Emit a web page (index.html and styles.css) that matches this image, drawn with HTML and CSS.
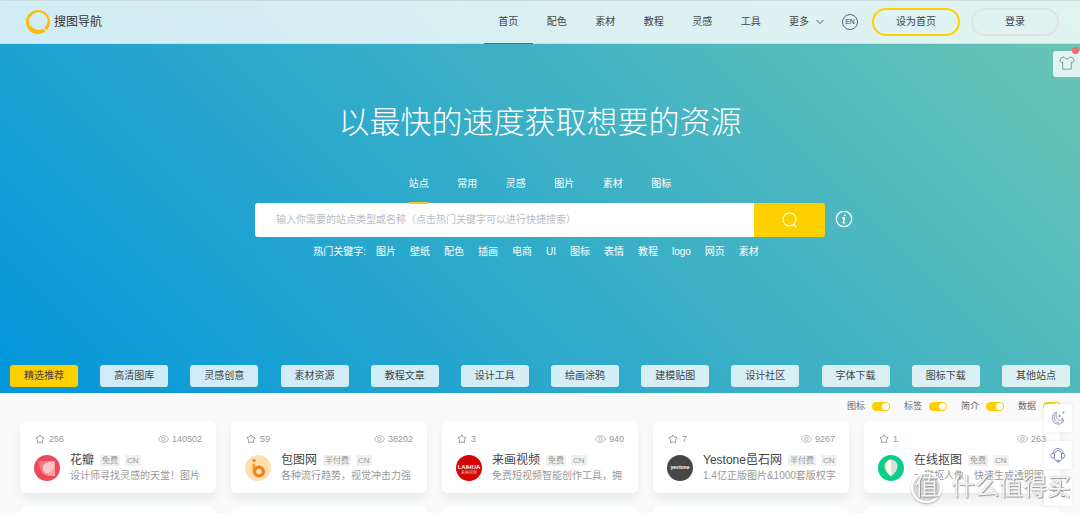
FILE: index.html
```html
<!DOCTYPE html>
<html lang="zh-CN">
<head>
<meta charset="utf-8">
<title>搜图导航</title>
<link rel="stylesheet" href="styles.css">
</head>
<body>
<svg class="defs" aria-hidden="true">
  <symbol id="star" viewBox="0 0 20 20"><path d="M10 1.800l2.800 4 5.200 1.500-3.200 4.500.1 5.700L10 15.800 5.100 17.500l.1-5.700L2 7.300l5.200-1.500z" fill="none" stroke="currentColor" stroke-width="1.900" stroke-linejoin="round"/></symbol>
  <symbol id="eye" viewBox="0 0 22 16"><path d="M1 8C5-1 17-1 21 8 17 17 5 17 1 8z" fill="none" stroke="currentColor" stroke-width="1.400"/><circle cx="11" cy="8" r="3.300" fill="none" stroke="currentColor" stroke-width="1.400"/></symbol>
</svg>
<div class="hero">
  <header class="header">
    <a class="brand" href="#">
      <svg class="brand-logo" viewBox="0 0 24 24"><path fill="#fdbc0b" fill-rule="evenodd" d="M12 0a12 12 0 1 1 0 24A12 12 0 0 1 12 0zM12.500 2a9 9 0 1 0 0 18 9 9 0 0 0 0-18z"/><path d="M4 6.500C2.500 10 2.700 14 4.600 17" fill="none" stroke="#fff0b5" stroke-width=".6"/><path d="M17.500 18l4 4.500" stroke="#d5edf3" stroke-width="1.500"/></svg>
      <span>搜图导航</span>
    </a>
    <nav class="nav">
      <a class="nav-item active" href="#">首页</a><a class="nav-item" href="#">配色</a><a class="nav-item" href="#">素材</a><a class="nav-item" href="#">教程</a><a class="nav-item" href="#">灵感</a><a class="nav-item" href="#">工具</a>
    </nav>
    <button class="more" type="button">更多 <svg width="8" height="6" viewBox="0 0 8 6"><path d="M.5 1L4 4.500 7.500 1" fill="none" stroke="currentColor" stroke-width=".9"/></svg></button>
    <button class="lang" type="button">EN</button>
    <button class="pill pill-main" type="button">设为首页</button>
    <button class="pill" type="button">登录</button>
  </header>
  <h1 class="title">以最快的速度获取想要的资源</h1>
  <nav class="tabs">
    <a class="tab" href="#"><span class="current">站点</span></a><a class="tab" href="#"><span>常用</span></a><a class="tab" href="#"><span>灵感</span></a><a class="tab" href="#"><span>图片</span></a><a class="tab" href="#"><span>素材</span></a><a class="tab" href="#"><span>图标</span></a>
  </nav>
  <form class="search">
    <input class="search-input" type="text" aria-label="搜索" placeholder="输入你需要的站点类型或名称（点击热门关键字可以进行快捷搜索）">
    <button class="search-button" type="button" aria-label="搜索"><svg width="16" height="16" viewBox="0 0 16 16" fill="none" stroke="#fff" stroke-width="1.200"><circle cx="7.500" cy="7.500" r="6.500"/><path d="M11.500 12.500l2.800 2.800" stroke-width="1.500"/></svg></button>
    <button class="info" type="button" aria-label="说明"><svg width="18" height="18" viewBox="0 0 18 18" fill="none" stroke="#fff"><circle cx="9" cy="9" r="7.700" stroke-width="1.300"/><path d="M7 8h2.500l-1.300 4.500c0 .8 1 .7 2 0" stroke-width="1.300"/><circle cx="9.800" cy="5.300" r=".6" fill="#fff"/></svg></button>
  </form>
  <div class="keywords">
    <span>热门关键字:</span><a href="#">图片</a><a href="#">壁纸</a><a href="#">配色</a><a href="#">插画</a><a href="#">电商</a><a href="#">UI</a><a href="#">图标</a><a href="#">表情</a><a href="#">教程</a><a href="#">logo</a><a href="#">网页</a><a href="#">素材</a>
  </div>
  <div class="categories">
    <button class="category selected" type="button">精选推荐</button>
    <button class="category" type="button">高清图库</button>
    <button class="category" type="button">灵感创意</button>
    <button class="category" type="button">素材资源</button>
    <button class="category" type="button">教程文章</button>
    <button class="category" type="button">设计工具</button>
    <button class="category" type="button">绘画涂鸦</button>
    <button class="category" type="button">建模贴图</button>
    <button class="category" type="button">设计社区</button>
    <button class="category" type="button">字体下载</button>
    <button class="category" type="button">图标下载</button>
    <button class="category" type="button">其他站点</button>
  </div>
</div>
<main>
  <div class="switches">
    <label>图标<input type="checkbox" checked></label>
    <label>标签<input type="checkbox" checked></label>
    <label>简介<input type="checkbox" checked></label>
    <label>数据<input type="checkbox" checked></label>
  </div>
  <div class="cards">
    <article class="card">
      <div class="stats"><svg class="star"><use href="#star"/></svg><span>256</span><svg class="eye"><use href="#eye"/></svg><span>140502</span></div>
      <div class="site">
        <svg class="avatar" viewBox="0 0 26 26"><circle cx="13" cy="13" r="13" fill="#ee4958"/><path d="M5 6h16v15h-7C8 20 5 15 5 6z" fill="#f47b84"/><path d="M21 6v15C13 21 8 18 9 13S15 6 21 6z" fill="#f7a0a5"/><path d="M9 14c-1-5 4-8 11-7 1 6-2 11-7 11-2 0-4-2-4-4z" fill="#fac8c9"/></svg>
        <div class="details"><h2>花瓣<span class="tag">免费</span><span class="tag">CN</span></h2><p>设计师寻找灵感的天堂！图片</p></div>
      </div>
    </article>
    <article class="card">
      <div class="stats"><svg class="star"><use href="#star"/></svg><span>59</span><svg class="eye"><use href="#eye"/></svg><span>38202</span></div>
      <div class="site">
        <svg class="avatar" viewBox="0 0 26 26"><circle cx="13" cy="13" r="13" fill="#ffe0ac"/><circle cx="9" cy="5.500" r="1.800" fill="#ee8b2c"/><path d="M9 10v7" stroke="#f1a02d" stroke-width="3" stroke-linecap="round"/><circle cx="14" cy="16.500" r="4.400" fill="none" stroke="#eb8524" stroke-width="3.200"/></svg>
        <div class="details"><h2>包图网<span class="tag">半付费</span><span class="tag">CN</span></h2><p>各种流行趋势，视觉冲击力强</p></div>
      </div>
    </article>
    <article class="card">
      <div class="stats"><svg class="star"><use href="#star"/></svg><span>3</span><svg class="eye"><use href="#eye"/></svg><span>940</span></div>
      <div class="site">
        <svg class="avatar" viewBox="0 0 26 26"><circle cx="13" cy="13" r="13" fill="#d30505"/><text class="logo-bold" x="13" y="14" text-anchor="middle">LAIHUA</text><text class="logo-small" x="13" y="19" text-anchor="middle">来画视频</text></svg>
        <div class="details"><h2>来画视频<span class="tag">免费</span><span class="tag">CN</span></h2><p>免费短视频智能创作工具，拥</p></div>
      </div>
    </article>
    <article class="card">
      <div class="stats"><svg class="star"><use href="#star"/></svg><span>7</span><svg class="eye"><use href="#eye"/></svg><span>9267</span></div>
      <div class="site">
        <svg class="avatar" viewBox="0 0 26 26"><circle cx="13" cy="13" r="13" fill="#464646"/><text class="logo-word" x="13" y="14" text-anchor="middle">yestone</text></svg>
        <div class="details"><h2>Yestone邑石网<span class="tag">半付费</span><span class="tag">CN</span></h2><p>1.4亿正版图片&amp;1000套版权字</p></div>
      </div>
    </article>
    <article class="card">
      <div class="stats"><svg class="star"><use href="#star"/></svg><span>1</span><svg class="eye"><use href="#eye"/></svg><span>263</span></div>
      <div class="site">
        <svg class="avatar" viewBox="0 0 26 26"><circle cx="13" cy="13" r="13" fill="#07ce8d"/><path d="M13 21.500C9 18 6.500 15 6.500 11A6.500 6.500 0 0 1 13 4.500z" fill="#ffe798"/><path d="M13 21.500c-3-3.500-4.500-6.500-4.500-10.500 0-3.500 2-6.500 4.500-6.500z" fill="#fff"/><path d="M13 21.500c4-3.500 6.500-6.500 6.500-10.500A6.500 6.500 0 0 0 13 4.500z" fill="#dedede"/></svg>
        <div class="details"><h2>在线抠图<span class="tag">免费</span><span class="tag">CN</span></h2><p>一键抠人像，快速生成透明图</p></div>
      </div>
    </article>
    <article class="card"></article><article class="card"></article><article class="card"></article><article class="card"></article><article class="card"></article>
  </div>
</main>
<button class="skin" type="button" aria-label="换肤"><svg width="16" height="14" viewBox="0 0 16 14" fill="none" stroke="#8b9999" stroke-width="1"><path d="M5 1l-2.500.6L.7 5l2 1.700 1-.7v7.200h8.600V6l1 .7 2-1.700-1.800-3.400L11 1C10 3.500 6 3.500 5 1z" stroke-linejoin="round"/></svg><span class="dot"></span></button>
<div class="tools">
  <button type="button" aria-label="夜间模式"><svg width="14" height="14" viewBox="0 0 14 14" fill="none" stroke="#7b84a5"><path d="M5.500 1a6.200 6.200 0 1 0 7.500 8.500C8 11.500 3.500 6.500 5.500 1zM3.500 3.500c-1.500 4 .5 7.500 4.500 8.500" stroke-width=".8"/><path d="M12.500.5v2M11.500 1.500h2M8.500 4v2M7.500 5h2M11.500 7v2M10.500 8h2" stroke-width=".9"/></svg></button>
  <button type="button" aria-label="客服"><svg width="16" height="16" viewBox="0 0 16 16" fill="none" stroke="#7b84a5"><path d="M3 6.500a5 5 0 0 1 10 0M4.800 6a3.300 3.300 0 0 1 6.400 0" stroke-width=".9"/><path d="M4.500 6.300C2 6 1 7.200 1 8.700S2 11.300 4.500 11zM11.500 6.300c2.500-.3 3.500.9 3.500 2.400s-1 2.600-3.500 2.300z"/><path d="M12 11.300c-.5 1.800-1.500 2.700-3 2.700M4 11.300c.5 1.300 1.500 2.200 3 2.700"/><circle cx="8" cy="14" r="1"/></svg></button>
  <button type="button" aria-label="返回顶部"><svg width="16" height="14" viewBox="0 0 16 14" fill="none" stroke="#7b84a5"><path d="M2 3h12M3 7l5-3 5 3M8 4v6M1 12l4-1M15 12l-4-1"/></svg></button>
</div>
<div class="watermark"><span class="seal">值</span><span>什么值得买</span></div>
</body>
</html>
```
FILE: styles.css
```css
* { box-sizing: border-box; }
body {
  margin: 0;
  height: 100vh;
  overflow: hidden;
  background: #fafafa;
  color: #444;
  font: 10px/20px "Liberation Sans", "Noto Sans CJK SC", sans-serif;
}
a { color: inherit; text-decoration: none; }
button { margin: 0; padding: 0; border: 0; background: none; color: inherit; font: inherit; cursor: pointer; }
svg { flex: none; }
.defs { position: absolute; width: 0; height: 0; }

.hero {
  display: flex;
  flex-direction: column;
  align-items: center;
  padding-bottom: 6px;
  color: #fff;
  background: linear-gradient(45deg, #0396db, #6cc6b4);
}
.header {
  align-self: stretch;
  display: flex;
  align-items: center;
  height: 44px;
  padding: 0 21px 0 26px;
  border-top: 1px solid #cbdde0;
  border-bottom: 1px solid #c5e4e7;
  background: rgba(255, 255, 255, .8);
  color: #444;
}
.brand { display: flex; align-items: center; gap: 4px; margin-right: auto; font-size: 12px; color: #333; }
.brand-logo { width: 24px; height: 24px; }
.nav { display: flex; width: 291px; height: 44px; }
.nav-item { flex: 1; text-align: center; line-height: 44px; }
.nav-item.active { border-bottom: 1px solid #47777c; }
.more { display: flex; align-items: center; gap: 7px; margin: 0 18px 0 14px; }
.lang { width: 16px; height: 16px; margin-right: 14px; border: 1px solid #5d6868; border-radius: 50%; font-size: 7px; line-height: 14px; }
.pill { width: 88px; height: 28px; border: 2px solid #e0e5e4; border-radius: 14px; }
.pill-main { margin-right: 11px; border-color: #ffcf0a; }

.title { margin: 54px 0 24px; font-size: 31px; line-height: 44px; font-weight: 300; font-family: "Noto Sans CJK SC", sans-serif; }
.tabs { position: relative; z-index: 1; display: flex; width: 291px; margin-bottom: -1px; }
.tab { flex: 1; height: 38px; text-align: center; line-height: 36px; }
.tab span { display: inline-block; border-bottom: 2px solid transparent; }
.tab .current { border-color: #f2cf20; }
.search { position: relative; display: flex; width: 570px; height: 34px; }
.search-input { flex: 1; min-width: 0; padding: 0 21px; border: 0; border-radius: 3px 0 0 3px; background: #fff; font: inherit; color: #444; outline: 0; }
.search-input::placeholder { color: #b8bcc4; }
.search-button { display: flex; align-items: center; justify-content: center; width: 71px; border-radius: 0 3px 3px 0; background: #ffd000; }
.info { position: absolute; left: 100%; top: 7px; margin-left: 10px; height: 18px; }
.info svg { display: block; }
.keywords { display: flex; gap: 14px; margin: 5px 8px 103px 0; }
.keywords span { margin-right: -4px; }
.categories { align-self: stretch; display: flex; justify-content: space-between; padding: 0 10px; }
.category { width: 68px; height: 22px; border-radius: 3px; background: rgba(255, 255, 255, .8); color: #444; }
.category.selected { background: #ffd000; }

.switches { display: flex; align-items: flex-start; justify-content: flex-end; gap: 14px; height: 28px; padding: 3px 19px 0 0; font-size: 9px; color: #666; }
.switches label { display: flex; align-items: center; gap: 7px; }
.switches input { appearance: none; display: flex; justify-content: flex-end; width: 18px; height: 9px; margin: 0; padding: 1px; border-radius: 5px; background: #ffd000; }
.switches input::after { content: ""; width: 7px; height: 7px; border-radius: 50%; background: #fff; }

.cards { display: grid; grid-template-columns: repeat(5, 1fr); gap: 14px 15px; padding: 0 20px; }
.card { min-width: 0; min-height: 72px; padding: 12px 14px 10px; border-radius: 6px; background: #fff; box-shadow: 0 6px 10px rgba(100, 140, 160, .12); }
.stats { display: flex; align-items: center; height: 12px; padding-left: 1px; font-size: 9px; line-height: 12px; color: #999; }
.star { width: 10px; height: 10px; margin-right: 4px; }
.eye { width: 11px; height: 8px; margin: 0 3px 0 auto; }
.site { display: flex; align-items: center; gap: 10px; margin-top: 7px; }
.avatar { width: 26px; height: 26px; }
.details { min-width: 0; }
.details h2 { display: flex; align-items: center; margin: 0; font-size: 12px; line-height: 16px; font-weight: 400; color: #444; white-space: nowrap; }
.tag { margin-left: 5px; padding: 0 2px; border-radius: 1px; background: #f0f0f0; color: #999; font-size: 8px; line-height: 11px; }
.tag:first-of-type { margin-left: 6px; }
.details p { margin: 0; font-size: 10px; line-height: 15px; color: #999; white-space: nowrap; }
.logo-bold { fill: #fff; font: bold 6px "Liberation Sans", sans-serif; }
.logo-small { fill: #f3b4b4; font: 4px "Noto Sans CJK SC", sans-serif; }
.logo-word { fill: #fff; font: bold 5px "Liberation Sans", sans-serif; }

.skin { position: absolute; top: 51px; right: 0; display: flex; align-items: center; justify-content: center; width: 27px; height: 26px; padding-bottom: 3px; border-radius: 3px 0 0 3px; background: rgba(255, 255, 255, .8); }
.dot { position: absolute; top: -4px; right: 1px; width: 7px; height: 7px; border-radius: 50%; background: #f66; }
.tools { position: fixed; right: 8px; bottom: 7px; display: flex; flex-direction: column; gap: 9px; }
.tools button { display: flex; align-items: center; justify-content: center; width: 28px; height: 28px; border-radius: 3px; background: #fff; box-shadow: 0 0 4px rgba(0, 0, 0, .08); }
.watermark { position: fixed; right: 9px; bottom: 10px; display: flex; align-items: center; gap: 9px; font-size: 24px; line-height: 32px; color: rgba(255, 255, 255, .9); text-shadow: 1px 1px 1px #999, 0 0 1px #999; pointer-events: none; }
.seal { width: 31px; height: 31px; border: 2px solid #fff; border-radius: 50%; background: rgba(205, 205, 205, .8); box-shadow: 0 1px 2px #aaa; text-align: center; line-height: 26px; }
```
